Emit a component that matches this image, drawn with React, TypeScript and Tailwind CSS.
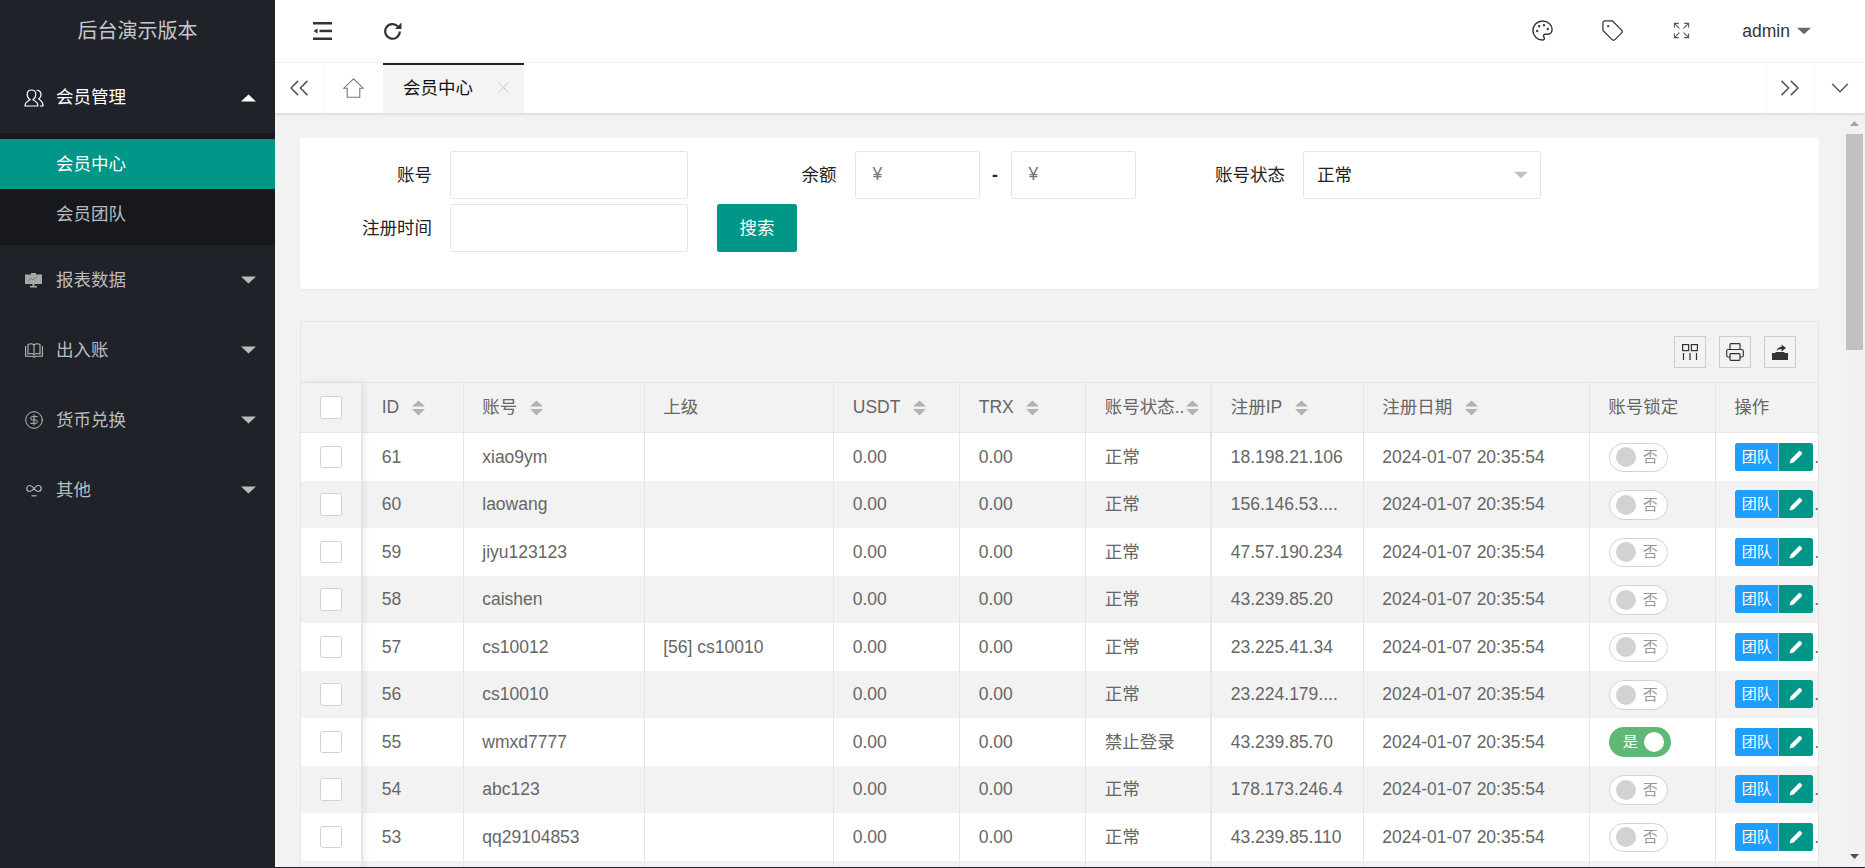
import React from 'react';
import { ChevronDown, ChevronsLeft, ChevronsRight, CircleDollarSign, Expand, Palette, Printer, Tag, X } from 'lucide-react';

const rows = [
  { id: 61, account: 'xiao9ym', parent: '', status: '正常', ip: '18.198.21.106', locked: false },
  { id: 60, account: 'laowang', parent: '', status: '正常', ip: '156.146.53....', locked: false },
  { id: 59, account: 'jiyu123123', parent: '', status: '正常', ip: '47.57.190.234', locked: false },
  { id: 58, account: 'caishen', parent: '', status: '正常', ip: '43.239.85.20', locked: false },
  { id: 57, account: 'cs10012', parent: '[56] cs10010', status: '正常', ip: '23.225.41.34', locked: false },
  { id: 56, account: 'cs10010', parent: '', status: '正常', ip: '23.224.179....', locked: false },
  { id: 55, account: 'wmxd7777', parent: '', status: '禁止登录', ip: '43.239.85.70', locked: true },
  { id: 54, account: 'abc123', parent: '', status: '正常', ip: '178.173.246.4', locked: false },
  { id: 53, account: 'qq29104853', parent: '', status: '正常', ip: '43.239.85.110', locked: false },
];

const gridCols = 'grid grid-cols-[100.5px_181px_189.5px_126px_126px_126px_151.5px_226px_126px_103px]';
const cell = 'flex items-center px-[18.75px] border-r border-[#e6e6e6] overflow-hidden whitespace-nowrap';

function Triangle({ up, className }: { up?: boolean; className: string }) {
  return (
    <svg width="15" height="8" viewBox="0 0 15 8" className={className}>
      <polygon points={up ? '7.5,0.5 15,7.5 0,7.5' : '0,0.5 15,0.5 7.5,7.5'} fill="currentColor" />
    </svg>
  );
}

function Sort({ className = 'ml-[12.5px]' }: { className?: string }) {
  return (
    <svg width="13" height="16" viewBox="0 0 13 16" className={`shrink-0 text-[#b2b2b2] ${className}`}>
      <polygon points="6.5,0.5 13,6.5 0,6.5" fill="currentColor" />
      <polygon points="0,9 13,9 6.5,15.5" fill="currentColor" />
    </svg>
  );
}

function UserIcon() {
  return (
    <svg width="20" height="18" viewBox="0 0 20 18" fill="none" stroke="white" strokeWidth="1.2">
      <path d="M1 17c0-3.5 2.5-5 5-6.2-1.800-1.300-2.800-3.300-2.800-5.300C3.200 2.800 5 1 7.500 1s4.300 1.800 4.300 4.500c0 2-1 4-2.800 5.300 2.500 1.200 5 2.700 5 6.200z" />
      <path d="M12.500 1.300c2.500-.3 4.500 1.500 4.500 4.200 0 1.900-.9 3.500-2.300 4.500 2.200 1.200 4.300 2.700 4.300 7h-3" />
    </svg>
  );
}

function ChartIcon() {
  return (
    <svg width="17" height="15" viewBox="0 0 17 15">
      <path d="M6 0h5v1.500h6V11H9.500v2H12v1.500H5V13h2.500v-2H0V1.500h6z" fill="#a8a8a8" />
      <path d="M3 8l3-2.500 2 1.500L12 4" fill="none" stroke="#6f6f6f" strokeWidth="0.8" />
    </svg>
  );
}

function BookIcon() {
  return (
    <svg width="18" height="15" viewBox="0 0 18 15" fill="none" stroke="#b8b8b8" strokeWidth="1.100">
      <path d="M3 1.500c2-1 4.500-.8 6 .5 1.500-1.300 4-1.500 6-.5V11c-2-.7-4.500-.5-6 .8-1.500-1.300-4-1.500-6-.8z" />
      <path d="M9 2v9.800" />
      <path d="M.6 3v10.300h6.400c.8 0 1.500.5 2 1 .5-.5 1.200-1 2-1h6.400V3" />
    </svg>
  );
}

function SeniorIcon() {
  return (
    <svg width="16" height="13" viewBox="0 0 16 13" fill="none" stroke="#b8b8b8" strokeWidth="1.200">
      <path d="M8 4.500C6.500 2.500 5 1.500 3.800 1.500a3 3 0 0 0 0 6C5 7.500 6.500 6.500 8 4.500c1.500-2 3-3 4.200-3a3 3 0 0 1 0 6C11 7.500 9.500 6.500 8 4.500z" />
      <path d="M5.500 11.800h5" />
    </svg>
  );
}

function NavItem({ icon, label, open }: { icon: React.ReactNode; label: string; open?: boolean }) {
  return (
    <div className={`flex h-[70px] items-center ${open ? 'text-white' : 'text-[#bcbcbe]'}`}>
      <div className="flex w-[56px] shrink-0 justify-center pl-[11px]">{icon}</div>
      <span className="flex-1">{label}</span>
      {open ? <Triangle up className="mr-[19px] text-white" /> : <Triangle className="mr-[19px] text-[#bbbbbb]" />}
    </div>
  );
}

function Sidebar() {
  return (
    <aside className="h-full w-[275px] shrink-0 bg-[#20222a]">
      <div className="flex h-[62.5px] items-center justify-center text-[20px] text-[#c8c8ca]">后台演示版本</div>
      <NavItem icon={<UserIcon />} label="会员管理" open />
      <div className="bg-[#17181e] pt-[6.5px] pb-[6px]">
        <div className="flex h-[50px] items-center bg-[#009688] pl-[56px] text-white">会员中心</div>
        <div className="flex h-[50px] items-center pl-[56px] text-[#bcbcbe]">会员团队</div>
      </div>
      <NavItem icon={<ChartIcon />} label="报表数据" />
      <NavItem icon={<BookIcon />} label="出入账" />
      <NavItem icon={<CircleDollarSign size={20} strokeWidth={1.200} color="#b8b8b8" />} label="货币兑换" />
      <NavItem icon={<SeniorIcon />} label="其他" />
    </aside>
  );
}

function Header() {
  return (
    <header className="flex h-[62.5px] shrink-0 items-center border-b border-[#f6f6f6] bg-white pl-[38px] pr-[54px] text-[#333333]">
      <svg width="19" height="18" viewBox="0 0 19 18" fill="#333333">
        <rect x="0" y="0" width="19" height="2.500" />
        <rect x="0" y="15.500" width="19" height="2.500" />
        <rect x="6.500" y="7.700" width="12.500" height="2.500" />
        <polygon points="0.500,9 4.500,6.500 4.500,11.500" />
      </svg>
      <svg width="18" height="18" viewBox="0 0 18 18" fill="none" className="ml-[52px]">
        <path d="M14 4.600A7.300 7.300 0 1 0 15.800 9.500" stroke="#333333" strokeWidth="2.200" />
        <polygon points="17.500,0.500 17.500,7 11,7" fill="#333333" />
      </svg>
      <div className="flex-1" />
      <Palette size={23} strokeWidth={1.500} />
      <Tag size={23} strokeWidth={1.300} className="ml-[46.5px]" />
      <Expand size={19} strokeWidth={1.300} color="#555555" className="ml-[48.5px]" />
      <span className="ml-[51px]">admin</span>
      <Triangle className="ml-[7px] w-[14px] text-[#666666]" />
    </header>
  );
}

function TabBar() {
  return (
    <div className="relative z-10 flex h-[50.5px] shrink-0 bg-white text-[#111111] shadow-[0_1px_3px_rgba(0,0,0,0.14)]">
      <div className="flex w-[49px] items-center justify-center border-r border-[#f6f6f6]">
        <ChevronsLeft size={32} strokeWidth={1.200} color="#555555" />
      </div>
      <div className="flex w-[59px] items-center justify-center">
        <svg width="21" height="20" viewBox="0 0 21 20" fill="none" stroke="#777777" strokeWidth="1.100">
          <path d="M10.500 0.800L0.800 10.200h3.400v9h12.600v-9h3.400z" />
        </svg>
      </div>
      <div className="flex w-[140.5px] items-center border-t-[2.5px] border-[#20222a] bg-[#f4f4f4] pb-[2px] pl-[20px]">
        <span>会员中心</span>
        <X size={19} strokeWidth={1.200} color="#c4c4c4" className="ml-[21px]" />
      </div>
      <div className="flex-1" />
      <div className="flex w-[49.5px] items-center justify-center border-x border-[#f6f6f6]">
        <ChevronsRight size={32} strokeWidth={1.200} color="#555555" />
      </div>
      <div className="flex w-[50px] items-center justify-center">
        <ChevronDown size={30} strokeWidth={1.100} color="#555555" />
      </div>
    </div>
  );
}

function MoneyInput() {
  return (
    <div className="flex h-[47.5px] w-[125px] items-center rounded-[2.5px] border border-[#e6e6e6] bg-white pl-[17px] text-[#777777]">
      <span className="-mt-[2px]">¥</span>
    </div>
  );
}

function SearchCard() {
  const inputClass = 'h-[47.5px] w-[238px] rounded-[2.5px] border border-[#e6e6e6] bg-white';
  return (
    <div className="h-[151px] rounded-[2.5px] bg-white pt-[13px] text-[#222222] shadow-[0_1px_2px_rgba(0,0,0,0.05)]">
      <div className="flex items-center">
        <label className="w-[150px] pr-[18px] text-right">账号</label>
        <input className={inputClass} />
        <label className="w-[166.5px] pr-[18px] text-right">余额</label>
        <MoneyInput />
        <span className="w-[31px] text-center font-bold">-</span>
        <MoneyInput />
        <label className="w-[167.5px] pr-[18px] text-right">账号状态</label>
        <div className="flex h-[47.5px] w-[238px] items-center justify-between rounded-[2.5px] border border-[#e6e6e6] pl-[13px] pr-[12px]">
          <span>正常</span>
          <Triangle className="w-[14px] text-[#c2c2c2]" />
        </div>
      </div>
      <div className="mt-[5.5px] flex items-center">
        <label className="w-[150px] pr-[18px] text-right">注册时间</label>
        <input className={inputClass} />
        <button className="ml-[28.5px] h-[48px] w-[80px] rounded-[2.5px] bg-[#009688] pl-[1px] text-white">搜索</button>
      </div>
    </div>
  );
}

function ToolButton({ children }: { children: React.ReactNode }) {
  return (
    <div className="flex h-[32.5px] w-[32.5px] items-center justify-center border border-[#cccccc] text-[#333333]">
      {children}
    </div>
  );
}

function Toolbar() {
  return (
    <div className="flex h-[61px] items-center justify-end gap-[12.5px] border-b border-[#e6e6e6] bg-[#f2f2f2] pr-[22px]">
      <ToolButton>
        <svg width="16" height="16" viewBox="0 0 16 16" fill="none" stroke="#333333" strokeWidth="1.200">
          <rect x="0.600" y="0.600" width="6" height="6" />
          <rect x="9.400" y="0.600" width="6" height="6" />
          <path d="M1.500 9v7M8 9v7M14.500 9v7" />
        </svg>
      </ToolButton>
      <ToolButton>
        <Printer size={20} strokeWidth={1.400} />
      </ToolButton>
      <ToolButton>
        <svg width="16" height="16" viewBox="0 0 16 16" fill="#333333">
          <path d="M0 9h3l1-1h8l1 1h3v7H0z" />
          <path d="M4.500 7C5 4 7 3 9.500 3V0.500L14 4 9.500 7.500V5C7.500 5 6 5.500 4.500 7z" />
        </svg>
      </ToolButton>
    </div>
  );
}

function Checkbox() {
  return <div className="h-[22.5px] w-[22.5px] rounded-[2.5px] border border-[#d2d2d2] bg-white" />;
}

function Toggle({ on }: { on: boolean }) {
  if (on) {
    return (
      <div className="ml-[1px] mt-[1px] flex h-[30px] w-[61.5px] items-center rounded-full bg-[#5fb878] pl-[13.5px] text-[15px] text-white">
        <span>是</span>
        <span className="ml-[6.5px] h-[20px] w-[20px] rounded-full bg-white" />
      </div>
    );
  }
  return (
    <div className="ml-[1px] mt-[1px] flex h-[29.5px] w-[59px] items-center rounded-full border border-[#d2d2d2] bg-white pl-[6px] text-[15px] text-[#999999]">
      <span className="h-[20px] w-[20px] rounded-full bg-[#d2d2d2]" />
      <span className="ml-[6.5px]">否</span>
    </div>
  );
}

function Actions() {
  return (
    <div className="flex items-center">
      <div className="flex h-[28px] w-[44px] items-center justify-center rounded-l-[2.5px] border-r border-[#a8c8d8] bg-[#1e9fff] text-[15px] text-white">团队</div>
      <div className="flex h-[28px] w-[34px] items-center justify-center rounded-r-[2.5px] bg-[#009688]">
        <svg width="14" height="14" viewBox="0 0 13 13" fill="white">
          <path d="M0.500 12.500L1.500 8.800 8.900 1.300q1-1 2 0l.8.800q1 1 0 2L4.200 11.500z" />
        </svg>
      </div>
      <span className="ml-[1px] text-[#666666]">.</span>
    </div>
  );
}

function DataTable() {
  return (
    <div className="mt-[32px] flex-1 overflow-hidden border border-b-0 border-[#e6e6e6] text-[#666666]">
      <Toolbar />
      <div className="flex">
        <div className="relative z-[1] w-[62px] shrink-0 border-r-2 border-[#e6e6e6] shadow-[1px_0_8px_rgba(0,0,0,0.08)]">
          <div className="flex h-[50px] items-center justify-center border-b border-[#e6e6e6] bg-[#f2f2f2]">
            <Checkbox />
          </div>
          {rows.map((r, i) => (
            <div key={r.id} className={`flex h-[47.5px] items-center justify-center ${i % 2 ? 'bg-[#f2f2f2]' : 'bg-white'}`}>
              <Checkbox />
            </div>
          ))}
          <div className="h-[47.5px] bg-[#f2f2f2]" />
        </div>
        <div className="min-w-0 flex-1">
          <div className={`${gridCols} h-[50px] border-b border-[#e6e6e6] bg-[#f2f2f2]`}>
            <div className={cell}>ID<Sort /></div>
            <div className={cell}>账号<Sort /></div>
            <div className={cell}>上级</div>
            <div className={cell}>USDT<Sort /></div>
            <div className={cell}>TRX<Sort /></div>
            <div className={`${cell} border-r-2`}>账号状态..<Sort className="ml-[2px]" /></div>
            <div className={cell}>注册IP<Sort /></div>
            <div className={cell}>注册日期<Sort /></div>
            <div className={cell}>账号锁定</div>
            <div className="flex items-center overflow-hidden pl-[18.75px]">操作</div>
          </div>
          {rows.map((r, i) => (
            <div key={r.id} className={`${gridCols} h-[47.5px] ${i % 2 ? 'bg-[#f2f2f2]' : 'bg-white'}`}>
              <div className={cell}>{r.id}</div>
              <div className={cell}>{r.account}</div>
              <div className={cell}>{r.parent}</div>
              <div className={cell}>0.00</div>
              <div className={cell}>0.00</div>
              <div className={`${cell} border-r-2`}>{r.status}</div>
              <div className={cell}>{r.ip}</div>
              <div className={cell}>2024-01-07 20:35:54</div>
              <div className={cell}><Toggle on={r.locked} /></div>
              <div className="flex items-center overflow-hidden whitespace-nowrap pl-[19.75px]"><Actions /></div>
            </div>
          ))}
          <div className={`${gridCols} h-[47.5px] bg-[#f2f2f2]`}>
            <div className={cell} />
            <div className={cell} />
            <div className={cell} />
            <div className={cell} />
            <div className={cell} />
            <div className={`${cell} border-r-2`} />
            <div className={cell} />
            <div className={cell} />
            <div className={cell} />
            <div />
          </div>
        </div>
      </div>
    </div>
  );
}

function Scrollbar() {
  return (
    <div className="mr-[2px] flex h-full w-[17px] shrink-0 flex-col bg-[#f1f1f1]">
      <div className="flex h-[21px] items-center justify-center">
        <svg width="9" height="5" viewBox="0 0 9 5"><polygon points="4.500,0 9,5 0,5" fill="#a3a3a3" /></svg>
      </div>
      <div className="h-[216px] bg-[#c1c1c1]" />
      <div className="flex-1" />
      <div className="flex h-[21px] items-center justify-center">
        <svg width="9" height="5" viewBox="0 0 9 5"><polygon points="0,0 9,0 4.500,5" fill="#505050" /></svg>
      </div>
    </div>
  );
}

export default function App() {
  return (
    <div className="flex h-[868px] w-full overflow-hidden bg-[#20222a] font-['Liberation_Sans','Noto_Sans_CJK_SC',sans-serif] text-[17.5px]">
      <Sidebar />
      <div className="flex h-[866.5px] min-w-0 flex-1 flex-col bg-[#f2f2f2]">
        <Header />
        <TabBar />
        <div className="flex min-h-0 flex-1">
          <main className="flex min-w-0 flex-1 flex-col overflow-hidden pl-[25px] pr-[27px] pt-[25px]">
            <SearchCard />
            <DataTable />
          </main>
          <Scrollbar />
        </div>
      </div>
    </div>
  );
}
